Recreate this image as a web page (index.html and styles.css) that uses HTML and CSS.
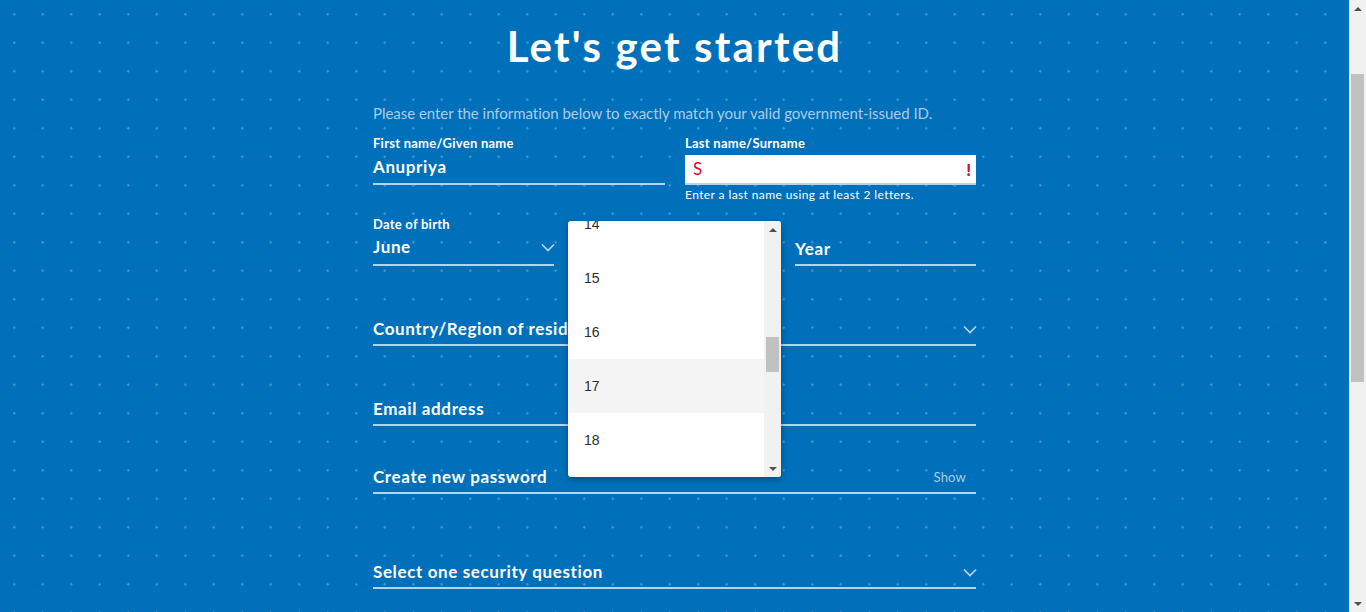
FILE: index.html
```html
<!DOCTYPE html>
<html lang="en">
<head>
<meta charset="utf-8">
<title>Let's get started</title>
<link rel="stylesheet" href="styles.css">
</head>
<body>
<div class="screen">
  <main class="page">
    <h1 class="title">Let's get started</h1>
    <form class="form">
      <p class="intro">Please enter the information below to exactly match your valid government-issued ID.</p>

      <div class="row-names">
        <div class="col">
          <label class="label">First name/Given name</label>
          <div class="input filled"><span class="value">Anupriya</span></div>
        </div>
        <div class="col">
          <label class="label">Last name/Surname</label>
          <div class="input invalid"><span class="value">S</span><span class="bang">!</span></div>
          <p class="err-msg">Enter a last name using at least 2 letters.</p>
        </div>
      </div>

      <div class="row-dob">
        <div class="col">
          <label class="label">Date of birth</label>
          <div class="field filled">
            <span class="value">June</span>
            <svg class="chev" width="14" height="9" viewBox="0 0 14 9"><path d="M1 1.5l6 6 6-6" fill="none" stroke="#b4d4ec" stroke-width="1.7"/></svg>
          </div>
        </div>
        <div class="col day">
          <span class="label spacer">&nbsp;</span>
          <div class="field ph"><span class="value">Day</span></div>
          <div class="menu">
            <ul class="menu-list">
              <li class="opt">14</li>
              <li class="opt">15</li>
              <li class="opt">16</li>
              <li class="opt hover">17</li>
              <li class="opt">18</li>
            </ul>
            <div class="menu-bar">
              <span class="arrow up"></span>
              <div class="menu-track"><span class="menu-thumb"></span></div>
              <span class="arrow down"></span>
            </div>
          </div>
        </div>
        <div class="col">
          <span class="label spacer">&nbsp;</span>
          <div class="field ph"><span class="value">Year</span></div>
        </div>
      </div>

      <div class="field ph country">
        <span class="value">Country/Region of residence</span>
        <svg class="chev" width="14" height="9" viewBox="0 0 14 9"><path d="M1 1.5l6 6 6-6" fill="none" stroke="#b4d4ec" stroke-width="1.7"/></svg>
      </div>
      <div class="field ph email"><span class="value">Email address</span></div>
      <div class="field ph password"><span class="value">Create new password</span><span class="show">Show</span></div>
      <div class="field ph security">
        <span class="value">Select one security question</span>
        <svg class="chev" width="14" height="9" viewBox="0 0 14 9"><path d="M1 1.5l6 6 6-6" fill="none" stroke="#b4d4ec" stroke-width="1.7"/></svg>
      </div>
    </form>
  </main>
  <div class="vscroll">
    <span class="arrow up"></span>
    <div class="vtrack"><span class="vthumb"></span></div>
    <span class="arrow down"></span>
  </div>
</div>
</body>
</html>
```

FILE: styles.css
```css
* { box-sizing: border-box; }
html, body { margin: 0; padding: 0; height: 612px; overflow: hidden; }
body { font-family: Lato, "Open Sans", sans-serif; color: #fff; }

.screen { display: flex; height: 612px; }

.page {
  flex: 1;
  background-color: #0070ba;
  background-image: radial-gradient(circle at center, rgba(190, 220, 245, 0.42) 0.9px, rgba(0, 112, 186, 0) 1.4px);
  background-size: 28.5px 28.5px;
  background-position: 0 0;
  overflow: hidden;
}

.title {
  margin: 0;
  padding-top: 21px;
  font-size: 42px;
  line-height: 50px;
  font-weight: 700;
  text-align: center;
  letter-spacing: 2.2px;
}

.form { width: 603px; margin: 0 auto; }

.intro {
  margin: 32px 0 0;
  font-size: 15px;
  line-height: 20px;
  color: #a9cde9;
  letter-spacing: -0.03px;
}

.label {
  display: block;
  font-size: 13px;
  line-height: 16px;
  font-weight: 700;
  letter-spacing: 0.25px;
}

.row-names {
  margin-top: 12px;
  display: grid;
  grid-template-columns: 292px 291px;
  column-gap: 20px;
  align-items: start;
}

.input {
  margin-top: 4px;
  height: 30px;
  border-bottom: 2px solid #b4d4ec;
  display: flex;
  align-items: center;
  justify-content: space-between;
}
.input.filled { padding-bottom: 4px; }
.input.invalid { background: #fff; padding: 0 5px 0 8px; }
.input.invalid .value { color: #d20a2a; font-weight: 400; }
.bang { color: #d20a2a; font-weight: 900; font-size: 17px; }

.value { font-size: 17px; line-height: 22px; font-weight: 700; letter-spacing: 0.62px; }

.err-msg { margin: 3px 0 0; font-size: 12px; line-height: 14px; letter-spacing: 0.4px; }

.row-dob {
  margin-top: 14px;
  display: grid;
  grid-template-columns: 181px 213px 181px;
  column-gap: 14px;
}

.field {
  height: 34px;
  border-bottom: 2px solid #b4d4ec;
  display: flex;
  align-items: center;
  justify-content: space-between;
}
.field.filled { padding-bottom: 2px; }
.field.ph { padding-top: 2px; }
.chev { flex: none; margin-right: -1px; }
.country .chev, .security .chev { margin-top: 1px; }

.day { position: relative; }

.menu {
  position: absolute;
  top: 5px;
  left: 0;
  width: 213px;
  height: 256px;
  background: #fff;
  border-radius: 3px;
  box-shadow: 0 2px 6px rgba(0, 0, 0, 0.35);
  display: flex;
  overflow: hidden;
  z-index: 2;
}
.menu-list {
  list-style: none;
  margin: -24px 0 0;
  padding: 0;
  flex: 1;
}
.opt {
  height: 54px;
  display: flex;
  align-items: center;
  padding-left: 16px;
  font-family: "Liberation Sans", Arial, sans-serif;
  font-size: 14px;
  color: #2c2c2c;
}
.opt.hover { background: #f4f4f4; }

.menu-bar {
  width: 17px;
  background: #f1f1f1;
  display: flex;
  flex-direction: column;
  align-items: center;
}
.menu-track { flex: 1; width: 100%; padding: 99px 2px 0; }
.menu-thumb { display: block; height: 35px; background: #c1c1c1; }

.arrow {
  flex: none;
  width: 17px;
  height: 17px;
  display: flex;
  align-items: center;
  justify-content: center;
}
.arrow::before {
  content: "";
  border-left: 4px solid transparent;
  border-right: 4px solid transparent;
}
.arrow.up::before { border-bottom: 4px solid #505050; }
.arrow.down::before { border-top: 4px solid #505050; }

.country { margin-top: 46px; }
.email { margin-top: 46px; }
.password { margin-top: 34px; }
.security { margin-top: 61px; }

.show {
  font-size: 13px;
  color: #a9cde9;
  margin-right: 10px;
  letter-spacing: 0.2px;
}

.vscroll {
  width: 17px;
  flex: none;
  background: #f1f1f1;
  display: flex;
  flex-direction: column;
}
.vtrack { flex: 1; padding: 57px 2px 0; }
.vthumb { display: block; height: 308px; background: #c1c1c1; }
```
